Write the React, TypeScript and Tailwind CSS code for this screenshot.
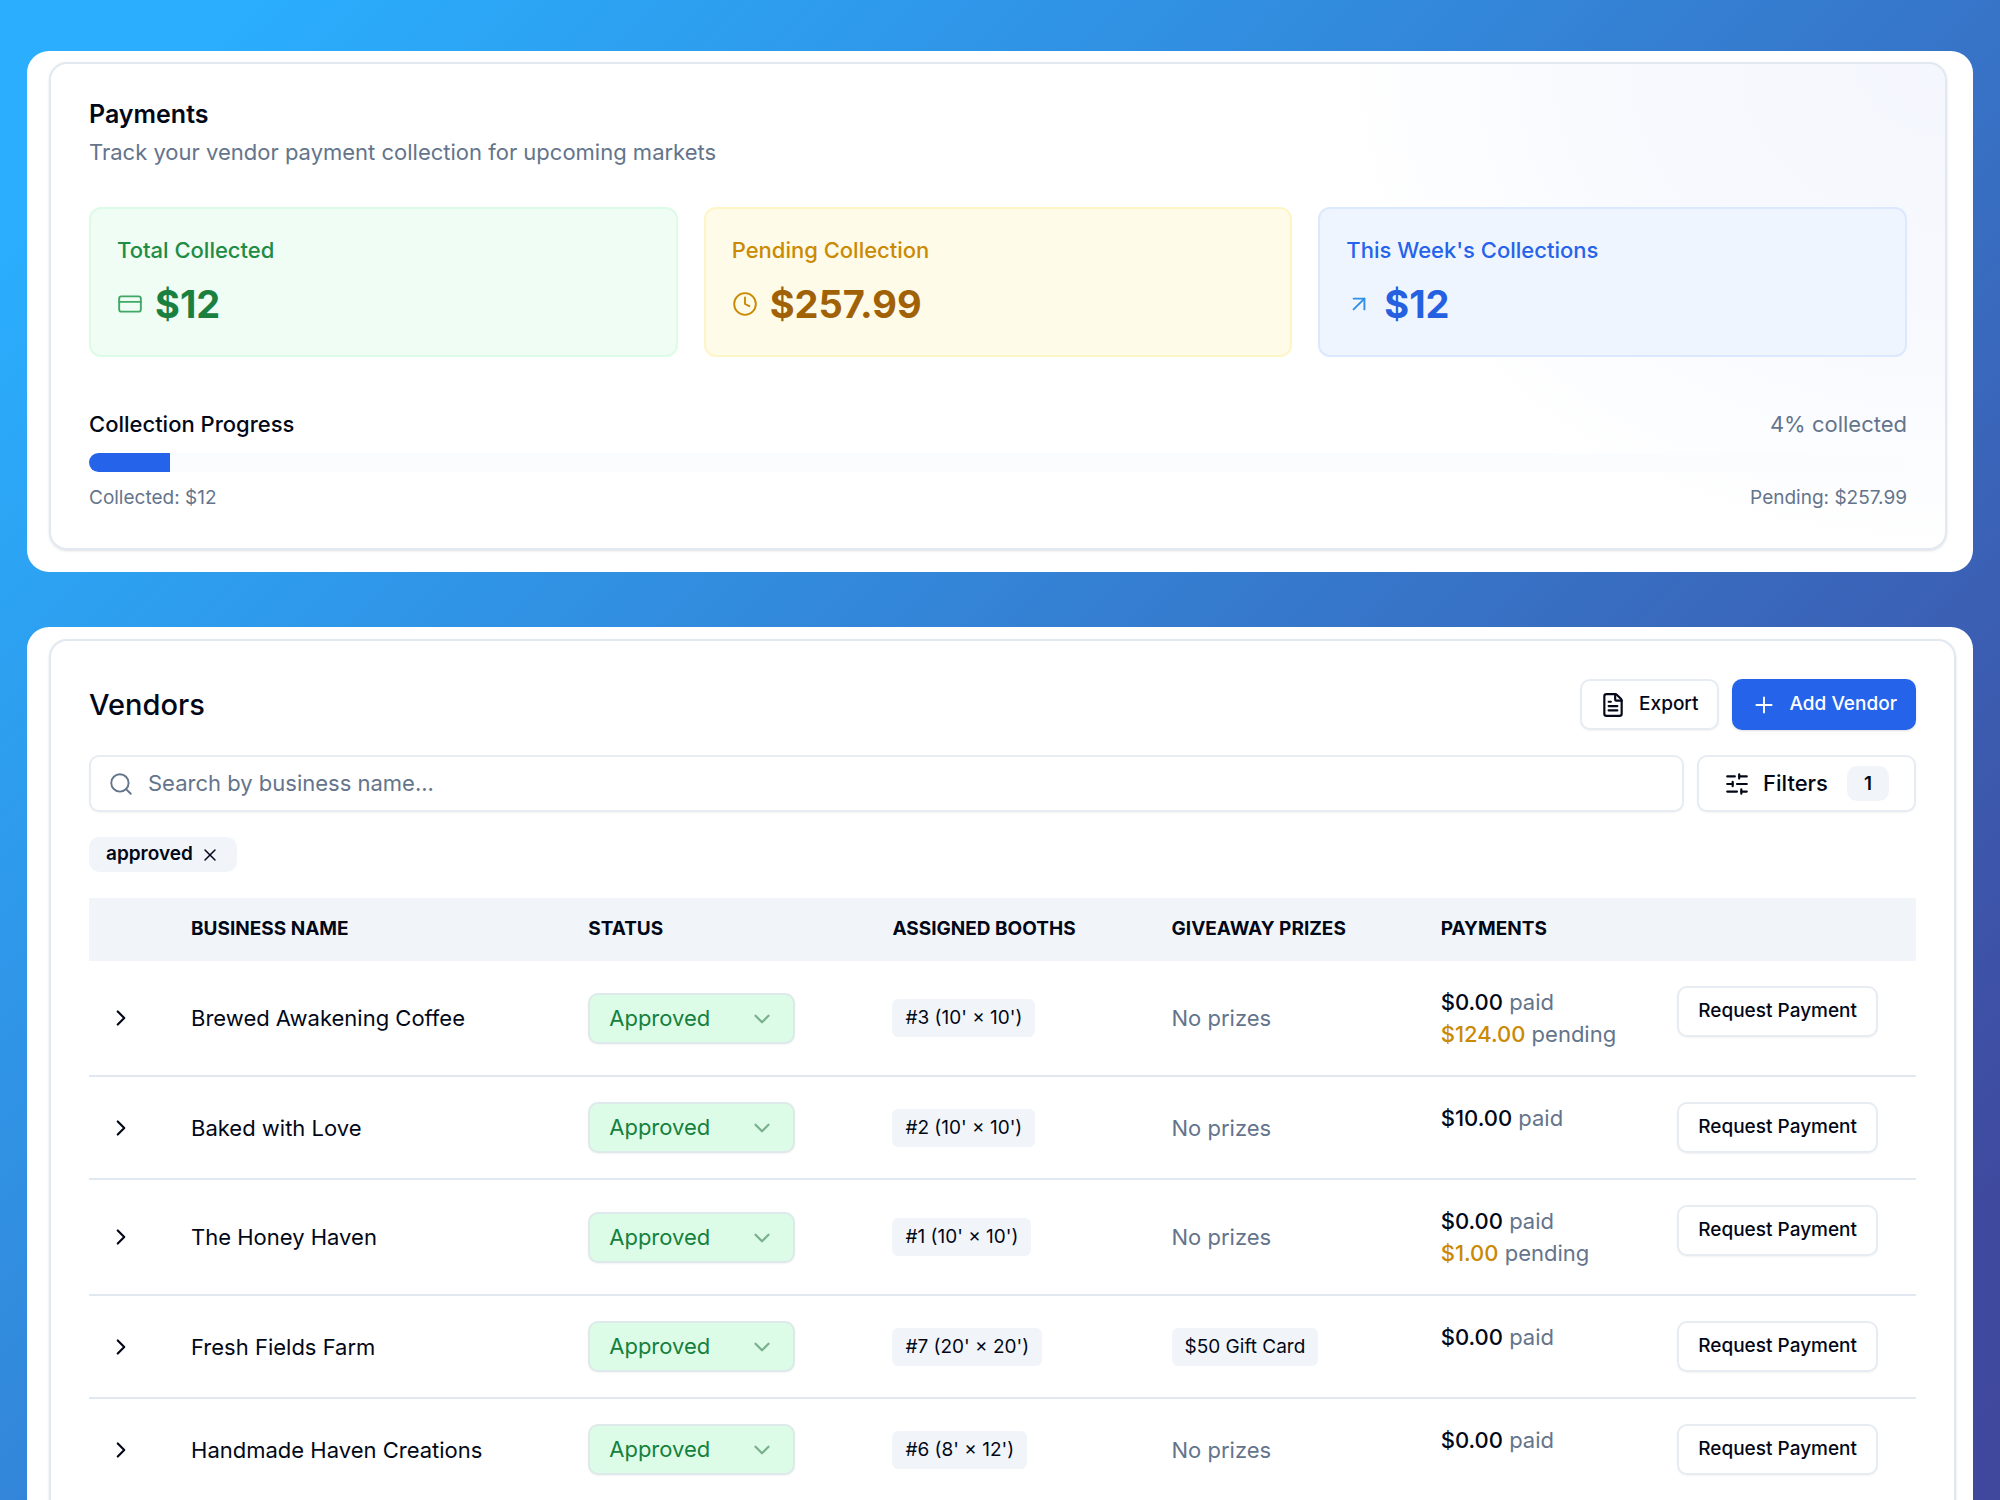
import React from "react";
import { ArrowUpRight, ChevronDown, ChevronRight, Clock, CreditCard, FileText, Plus, Search, SlidersHorizontal, X } from "lucide-react";

type Vendor = {
  name: string;
  booth: string;
  prize?: string;
  paid: string;
  pending?: string;
};

const vendors: Vendor[] = [
  { name: "Brewed Awakening Coffee", booth: "#3 (10' × 10')", paid: "$0.00", pending: "$124.00" },
  { name: "Baked with Love", booth: "#2 (10' × 10')", paid: "$10.00" },
  { name: "The Honey Haven", booth: "#1 (10' × 10')", paid: "$0.00", pending: "$1.00" },
  { name: "Fresh Fields Farm", booth: "#7 (20' × 20')", prize: "$50 Gift Card", paid: "$0.00" },
  { name: "Handmade Haven Creations", booth: "#6 (8' × 12')", paid: "$0.00" },
];

const stats = [
  {
    label: "Total Collected",
    value: "$12",
    icon: <CreditCard className="size-[26px] text-[#3fa866]" strokeWidth={1.75} />,
    box: "border-[#dcfce7] bg-[#f0fdf4]",
    labelColor: "text-[#218c46]",
    valueColor: "text-[#1a8040]",
  },
  {
    label: "Pending Collection",
    value: "$257.99",
    icon: <Clock className="size-[26px] text-[#ca8a04]" strokeWidth={1.75} />,
    box: "border-[#fef5c7] bg-[#fefbe8]",
    labelColor: "text-[#ca8a04]",
    valueColor: "text-[#a16207]",
  },
  {
    label: "This Week's Collections",
    value: "$12",
    icon: <ArrowUpRight className="size-[26px] text-[#2f8fe6]" strokeWidth={1.75} />,
    box: "border-[#dbe8fe] bg-[#eff5fe]",
    labelColor: "text-[#2563eb]",
    valueColor: "text-[#2460e0]",
  },
];

const outline = "rounded-[10px] border-2 border-[#e7ecf3] bg-white shadow-xs";

function Payments() {
  return (
    <section className="rounded-[22px] bg-white pt-[11px] pr-[26px] pb-[22px] pl-[22px]">
      <div className="rounded-[18px] border-2 border-[#e2e8f0] bg-[radial-gradient(ellipse_620px_500px_at_top_right,#f4f7fd_0%,#f7f9fe_50%,#ffffff_100%)] px-[38px] pt-[33px] pb-[37px] shadow-sm">
        <h2 className="text-[25px] leading-[34px] font-semibold">Payments</h2>
        <p className="mt-1 text-[22px] leading-[34px] text-[#64748b]">Track your vendor payment collection for upcoming markets</p>

        <div className="mt-[38px] grid grid-cols-3 gap-[26px]">
          {stats.map((s) => (
            <div key={s.label} className={"rounded-xl border-2 px-[26px] pt-[25px] pb-[25px] " + s.box}>
              <p className={"text-[22px] leading-[32px] font-medium " + s.labelColor}>{s.label}</p>
              <div className="mt-[12px] flex items-center gap-[12px]">
                {s.icon}
                <span className={"text-[38px] leading-[52px] font-bold " + s.valueColor}>{s.value}</span>
              </div>
            </div>
          ))}
        </div>

        <div className="mt-[51px] flex items-center justify-between text-[22px] leading-[32px]">
          <span id="progress-label" className="font-medium">Collection Progress</span>
          <span className="text-[#64748b]">4% collected</span>
        </div>
        <div
          role="progressbar"
          aria-labelledby="progress-label"
          aria-valuenow={4}
          aria-valuemin={0}
          aria-valuemax={100}
          className="mt-[13px] h-[19px] overflow-hidden rounded-full bg-[#fbfcfd]"
        >
          <div className="h-full bg-[#2563eb]" style={{ width: "4.44%" }} />
        </div>
        <div className="mt-[13px] flex items-center justify-between text-[19px] leading-[26px] text-[#64748b]">
          <span>Collected: $12</span>
          <span>Pending: $257.99</span>
        </div>
      </div>
    </section>
  );
}

function VendorRow({ vendor }: { vendor: Vendor }) {
  return (
    <tr className="border-b-2 border-[#e2e8f0]">
      <td className="py-[25px] pl-[19px]">
        <button type="button" aria-label={"Expand " + vendor.name} className="flex size-[26px] items-center justify-center">
          <ChevronRight className="size-[26px]" />
        </button>
      </td>
      <td className="px-[38px] py-[25px] text-[22px] leading-[32px]">{vendor.name}</td>
      <td className="px-[38px] py-[25px]">
        <div className="relative w-[207px]">
          <select
            aria-label={"Status of " + vendor.name}
            defaultValue="Approved"
            className="block h-[51px] w-full appearance-none rounded-[10px] border-2 border-[#dde9ea] bg-[#dcfce7] pl-[19px] text-[22px] text-[#15803d] shadow-xs"
          >
            <option>Approved</option>
          </select>
          <ChevronDown className="pointer-events-none absolute top-[13px] right-[20px] size-[26px] text-[#166534] opacity-50" />
        </div>
      </td>
      <td className="px-[38px] py-[25px]">
        <span className="inline-block rounded-md bg-[#f1f5f9] px-[13px] py-[6px] text-[19px] leading-[26px]">{vendor.booth}</span>
      </td>
      <td className="px-[38px] py-[25px] text-[22px] leading-[32px]">
        {vendor.prize ? (
          <span className="inline-block rounded-md bg-[#f1f5f9] px-[13px] py-[6px] text-[19px] leading-[26px]">{vendor.prize}</span>
        ) : (
          <span className="text-[#64748b]">No prizes</span>
        )}
      </td>
      <td className="px-[38px] py-[25px]">
        <div className="flex items-start justify-between">
          <div className="text-[22px] leading-[32px] text-[#64748b]">
            <div>
              <span className="font-medium text-[#020817]">{vendor.paid}</span> paid
            </div>
            {vendor.pending && (
              <div>
                <span className="font-medium text-[#ca8a04]">{vendor.pending}</span> pending
              </div>
            )}
          </div>
          <button type="button" className={"h-[51px] px-[19px] text-[19px] font-medium whitespace-nowrap " + outline}>
            Request Payment
          </button>
        </div>
      </td>
    </tr>
  );
}

function Vendors() {
  return (
    <section className="rounded-t-[22px] bg-white pt-[12px] pr-[17px] pl-[22px]">
      <div className="rounded-t-[18px] border-2 border-b-0 border-[#e2e8f0] px-[38px] pt-[38px] shadow-sm">
        <div className="flex items-center justify-between">
          <h2 className="text-[29px] leading-[40px] font-medium">Vendors</h2>
          <div className="flex gap-[13px]">
            <button type="button" className={"flex h-[51px] items-center gap-[13px] px-[18px] text-[19px] font-medium " + outline}>
              <FileText className="size-[26px]" />
              Export
            </button>
            <button type="button" className="flex h-[51px] items-center gap-[13px] rounded-[10px] bg-[#2563eb] px-[19px] text-[19px] font-medium text-white shadow-sm">
              <Plus className="size-[26px]" strokeWidth={1.75} />
              Add Vendor
            </button>
          </div>
        </div>

        <div className="mt-[25px] flex gap-[13px]">
          <label className={"flex h-[57px] flex-1 items-center gap-[14px] px-[17px] " + outline}>
            <Search className="size-[26px] text-[#64748b]" strokeWidth={1.75} />
            <input
              type="text"
              aria-label="Search vendors"
              placeholder="Search by business name..."
              className="min-w-0 flex-1 bg-transparent text-[22px] outline-none placeholder:text-[#64748b]"
            />
          </label>
          <button type="button" className={"flex h-[57px] items-center px-[25px] text-[22px] font-medium " + outline}>
            <SlidersHorizontal className="size-[26px]" />
            <span className="ml-[13px]">Filters</span>
            <span className="ml-[19px] rounded-[10px] bg-[#f1f5f9] px-[17px] text-[19px] leading-[35px] font-semibold">1</span>
          </button>
        </div>

        <div className="mt-[25px] flex">
          <span className="flex h-[35px] items-center gap-[7px] rounded-[10px] bg-[#f1f5f9] px-[17px] text-[19px] font-semibold">
            approved
            <button type="button" aria-label="Remove approved filter">
              <X className="size-[20px]" strokeWidth={1.75} />
            </button>
          </span>
        </div>

        <div className="mt-[26px] overflow-x-auto">
          <table className="w-full table-fixed border-collapse text-left">
            <colgroup>
              <col className="w-[64px]" />
              <col className="w-[397px]" />
              <col className="w-[304px]" />
              <col className="w-[279px]" />
              <col className="w-[269px]" />
              <col className="w-[513px]" />
            </colgroup>
            <thead>
              <tr className="h-[63px] bg-[#f1f5f9] text-[19px] uppercase">
                <th aria-label="Expand" />
                <th className="px-[38px] font-bold">Business Name</th>
                <th className="px-[38px] font-bold">Status</th>
                <th className="px-[38px] font-bold">Assigned Booths</th>
                <th className="px-[38px] font-bold">Giveaway Prizes</th>
                <th className="px-[38px] font-bold">Payments</th>
              </tr>
            </thead>
            <tbody>
              {vendors.map((v) => (
                <VendorRow key={v.name} vendor={v} />
              ))}
            </tbody>
          </table>
        </div>
      </div>
    </section>
  );
}

export default function App() {
  return (
    <main className="flex h-screen flex-col gap-[55px] overflow-hidden bg-[linear-gradient(135deg,#2aaefd_0%,#2aaefd_7%,#3386d9_43%,#3f4a9f_91%,#3f489d_100%)] px-[27px] pt-[51px] font-['Inter',sans-serif] text-[#020817]">
      <Payments />
      <Vendors />
    </main>
  );
}
